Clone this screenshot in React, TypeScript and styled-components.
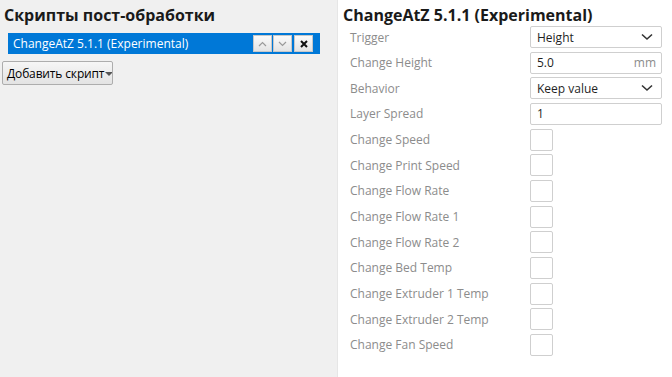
import styled, { createGlobalStyle } from 'styled-components';

const GlobalStyle = createGlobalStyle`
  html, body {
    margin: 0;
    padding: 0;
    background: #ffffff;
  }
  body {
    font-family: 'Open Sans', 'Noto Sans', sans-serif;
  }
`;

type Setting =
  | { label: string; kind: 'select'; value: string }
  | { label: string; kind: 'text'; value: string; unit?: string }
  | { label: string; kind: 'check' };

const settings: Setting[] = [
  { label: 'Trigger', kind: 'select', value: 'Height' },
  { label: 'Change Height', kind: 'text', value: '5.0', unit: 'mm' },
  { label: 'Behavior', kind: 'select', value: 'Keep value' },
  { label: 'Layer Spread', kind: 'text', value: '1' },
  { label: 'Change Speed', kind: 'check' },
  { label: 'Change Print Speed', kind: 'check' },
  { label: 'Change Flow Rate', kind: 'check' },
  { label: 'Change Flow Rate 1', kind: 'check' },
  { label: 'Change Flow Rate 2', kind: 'check' },
  { label: 'Change Bed Temp', kind: 'check' },
  { label: 'Change Extruder 1 Temp', kind: 'check' },
  { label: 'Change Extruder 2 Temp', kind: 'check' },
  { label: 'Change Fan Speed', kind: 'check' },
];

function Chevron() {
  return (
    <svg width="12" height="8" viewBox="0 0 12 8">
      <path d="M1 1.5 L6 6 L11 1.5" fill="none" stroke="#333" strokeWidth="1.6" />
    </svg>
  );
}

function SmallArrow({ up }: { up?: boolean }) {
  return (
    <svg width="9" height="6" viewBox="0 0 9 6">
      <path
        d={up ? 'M1 5 L4.5 1.5 L8 5' : 'M1 1 L4.5 4.5 L8 1'}
        fill="none"
        stroke="#9a9a9a"
        strokeWidth="1.2"
      />
    </svg>
  );
}

function Cross() {
  return (
    <svg width="8" height="8" viewBox="0 0 8 8">
      <path d="M1 1 L7 7 M7 1 L1 7" stroke="#111" strokeWidth="2" />
    </svg>
  );
}

export default function App() {
  return (
    <>
      <GlobalStyle />
      <Page>
        <ScriptsPanel>
          <PanelTitle>Скрипты пост-обработки</PanelTitle>
          <ScriptItem>
            <ScriptName>ChangeAtZ 5.1.1 (Experimental)</ScriptName>
            <ItemButtons>
              <ItemButton>
                <SmallArrow up />
              </ItemButton>
              <ItemButton>
                <SmallArrow />
              </ItemButton>
              <ItemButton>
                <Cross />
              </ItemButton>
            </ItemButtons>
          </ScriptItem>
          <AddButton>
            Добавить скрипт
            <DropTriangle />
          </AddButton>
        </ScriptsPanel>
        <SettingsPanel>
          <PanelTitle>ChangeAtZ 5.1.1 (Experimental)</PanelTitle>
          <SettingsList>
            {settings.map((s) => (
              <SettingRow key={s.label}>
                <SettingLabel>{s.label}</SettingLabel>
                {s.kind === 'select' && (
                  <Field>
                    <FieldValue>{s.value}</FieldValue>
                    <Chevron />
                  </Field>
                )}
                {s.kind === 'text' && (
                  <Field>
                    <FieldValue>{s.value}</FieldValue>
                    {s.unit && <Unit>{s.unit}</Unit>}
                  </Field>
                )}
                {s.kind === 'check' && <CheckBox />}
              </SettingRow>
            ))}
          </SettingsList>
        </SettingsPanel>
      </Page>
    </>
  );
}

const Page = styled.div`
  display: grid;
  grid-template-columns: 338px 1fr;
  width: 672px;
  height: 377px;
  overflow: hidden;
`;

const ScriptsPanel = styled.div`
  background: #f0f0f0;
  border-right: 1px solid #e6e6e6;
  padding: 4px 0 0 4px;
  display: flex;
  flex-direction: column;
  align-items: flex-start;
`;

const PanelTitle = styled.h2`
  margin: 0;
  font-family: 'Open Sans', 'Noto Sans', sans-serif;
  font-size: 16px;
  font-weight: 700;
  line-height: 22px;
  color: #1a1a1a;
  white-space: nowrap;
`;

const ScriptItem = styled.div`
  margin: 7px 0 0 4px;
  width: 312px;
  height: 21px;
  background: #0078d7;
  display: flex;
  align-items: center;
  justify-content: space-between;
  padding: 0 7px 0 5px;
  box-sizing: border-box;
`;

const ScriptName = styled.span`
  color: #ffffff;
  font-size: 12px;
  line-height: 16px;
  white-space: nowrap;
`;

const ItemButtons = styled.div`
  display: flex;
  gap: 1px;
`;

const ItemButton = styled.div`
  width: 19px;
  height: 17px;
  box-sizing: border-box;
  border: 1px solid #c8c8c8;
  background: linear-gradient(#fafafa, #e4e4e4);
  display: flex;
  align-items: center;
  justify-content: center;
  &:last-child {
    margin-left: 1px;
  }
`;

const AddButton = styled.div`
  margin: 7px 0 0 -2px;
  width: 111px;
  height: 24px;
  box-sizing: border-box;
  border: 1px solid #adadad;
  border-radius: 2px;
  background: linear-gradient(#f6f6f6, #e3e3e3);
  display: flex;
  align-items: center;
  padding: 0 3px 0 4px;
  font-size: 12px;
  letter-spacing: -0.15px;
  color: #000;
  white-space: nowrap;
  overflow: hidden;
`;

const DropTriangle = styled.span`
  flex: none;
  width: 0;
  height: 0;
  margin-left: 1px;
  margin-top: 2px;
  border-left: 4px solid transparent;
  border-right: 4px solid transparent;
  border-top: 4px solid #555;
`;

const SettingsPanel = styled.div`
  background: #ffffff;
  padding: 4px 0 0 5px;
  display: flex;
  flex-direction: column;
`;

const SettingsList = styled.div`
  display: flex;
  flex-direction: column;
  gap: 3.67px;
  padding-left: 7px;
`;

const SettingRow = styled.div`
  display: grid;
  grid-template-columns: 180px 132px;
  align-items: center;
  height: 22px;
`;

const SettingLabel = styled.span`
  font-size: 12px;
  color: #8c8c8c;
  white-space: nowrap;
`;

const Field = styled.div`
  height: 22px;
  box-sizing: border-box;
  border: 1px solid #cfcfcf;
  border-radius: 2px;
  background: #fff;
  display: flex;
  align-items: center;
  justify-content: space-between;
  padding: 0 8px 0 6px;
`;

const FieldValue = styled.span`
  font-size: 12px;
  color: #1f1f1f;
`;

const Unit = styled.span`
  font-size: 12px;
  color: #8c8c8c;
  margin-right: -3px;
`;

const CheckBox = styled.div`
  width: 23px;
  height: 22px;
  box-sizing: border-box;
  border: 1px solid #cfcfcf;
  border-radius: 2px;
  background: #fff;
`;
